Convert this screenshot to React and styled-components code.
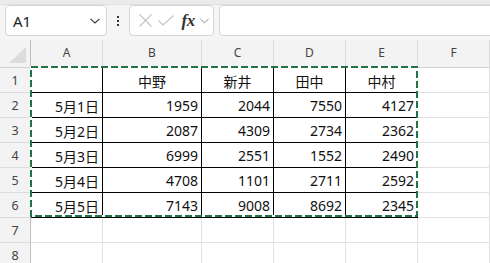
import React from 'react';
import styled, { createGlobalStyle } from 'styled-components';

const GlobalStyle = createGlobalStyle`
  html, body { margin: 0; padding: 0; background: #fff; overflow: hidden; }
  * { box-sizing: border-box; }
`;

const UI_FONT = `"Noto Sans", "Open Sans", "Noto Sans CJK JP", sans-serif`;
const CELL_FONT = `"Noto Sans", "Noto Sans CJK JP", sans-serif`;

const Window = styled.div`
  width: 490px;
  height: 263px;
  display: flex;
  flex-direction: column;
  overflow: hidden;
  background: #fff;
  & > * { flex-shrink: 0; }
`;

const TopStrip = styled.div`
  height: 5px;
  background: #ebebeb;
  border-bottom: 1px solid #e0e0e0;
`;

const Toolbar = styled.div`
  height: 35px;
  display: flex;
  align-items: flex-start;
  padding: 0 0 0 5px;
  background: #f5f5f5;
`;

const Box = styled.div`
  height: 31px;
  background: #fff;
  border: 1px solid #d6d6d6;
  border-radius: 4px;
  display: flex;
  align-items: center;
`;

const NameBox = styled(Box)`
  width: 102px;
  padding: 0 6px 0 7px;
  justify-content: space-between;
  font-family: ${UI_FONT};
  font-size: 15px;
  color: #222;
`;

const MoreDots = styled.div`
  width: 22px;
  height: 31px;
  display: flex;
  flex-direction: column;
  align-items: center;
  justify-content: center;
  gap: 2px;
  span {
    width: 2px;
    height: 2px;
    background: #333;
  }
`;

const FormulaButtons = styled(Box)`
  width: 85px;
  padding: 0 4px 0 5px;
`;

const IconSlot = styled.div`
  width: ${(p) => p.$w}px;
  display: flex;
  align-items: center;
  justify-content: center;
`;

const Fx = styled.span`
  font-family: "Liberation Serif", "DejaVu Serif", serif;
  font-style: italic;
  font-weight: bold;
  font-size: 17px;
  color: #333;
  letter-spacing: -0.5px;
`;

const FormulaInput = styled(Box)`
  flex: 1;
  margin-left: 5px;
  margin-right: -10px;
`;

const Sheet = styled.div`
  position: relative;
  display: grid;
  grid-template-columns: 31px 72px 99px 72px 72px 72px 72px;
  grid-template-rows: 28px repeat(8, 25px);
  background: #fff;
`;

const Corner = styled.div`
  background: #f3f3f3;
  border-right: 1px solid #bfbfbf;
  border-bottom: 1px solid #d0d0d0;
  display: flex;
  align-items: flex-end;
  justify-content: flex-end;
  padding: 0 4px 4px 0;
`;

const ColHead = styled.div`
  background: #f3f3f3;
  border-right: 1px solid #dadada;
  border-bottom: 1px solid #d0d0d0;
  display: flex;
  align-items: center;
  justify-content: center;
  padding-bottom: 2px;
  font-family: ${UI_FONT};
  font-size: 12px;
  color: #444;
`;

const RowHead = styled.div`
  background: #f3f3f3;
  border-right: 1px solid #bfbfbf;
  border-bottom: 1px solid #dcdcdc;
  display: flex;
  align-items: center;
  justify-content: center;
  font-family: ${UI_FONT};
  font-size: 12.5px;
  color: #444;
`;

const Cell = styled.div`
  border-right: 1px solid ${(p) => (p.$ruled ? '#000' : '#e1e1e1')};
  border-bottom: 1px solid ${(p) => (p.$ruled ? '#000' : '#e1e1e1')};
  display: flex;
  align-items: center;
  justify-content: ${(p) => (p.$align === 'center' ? 'center' : 'flex-end')};
  padding: 1px 3px 0 3px;
  font-family: ${CELL_FONT};
  font-size: 14px;
  color: #111;
  white-space: nowrap;
`;

const Marquee = styled.svg`
  position: absolute;
  left: 0;
  top: 0;
  pointer-events: none;
`;

const columns = ['A', 'B', 'C', 'D', 'E', 'F'];
const names = ['中野', '新井', '田中', '中村'];
const data = [
  ['5月1日', 1959, 2044, 7550, 4127],
  ['5月2日', 2087, 4309, 2734, 2362],
  ['5月3日', 6999, 2551, 1552, 2490],
  ['5月4日', 4708, 1101, 2711, 2592],
  ['5月5日', 7143, 9008, 8692, 2345],
];

const Chevron = ({ color = '#333', w = 10 }) => (
  <svg width={w} height={6} viewBox="0 0 10 6">
    <path d="M0.5 0.8 L5 5 L9.5 0.8" fill="none" stroke={color} strokeWidth="1.1" />
  </svg>
);

const App = () => {
  const rows = [];

  rows.push(
    <React.Fragment key="r1">
      <RowHead>1</RowHead>
      <Cell $ruled />
      {names.map((n) => (
        <Cell key={n} $ruled $align="center">{n}</Cell>
      ))}
      <Cell />
    </React.Fragment>
  );

  data.forEach((row, i) => {
    rows.push(
      <React.Fragment key={`r${i + 2}`}>
        <RowHead>{i + 2}</RowHead>
        {row.map((v, j) => (
          <Cell key={j} $ruled>{v}</Cell>
        ))}
        <Cell />
      </React.Fragment>
    );
  });

  [7, 8].forEach((n) => {
    rows.push(
      <React.Fragment key={`r${n}`}>
        <RowHead>{n}</RowHead>
        {columns.map((c) => (
          <Cell key={c} />
        ))}
      </React.Fragment>
    );
  });

  return (
    <>
      <GlobalStyle />
      <Window>
        <TopStrip />
        <Toolbar>
          <NameBox>
            <span>A1</span>
            <Chevron />
          </NameBox>
          <MoreDots>
            <span />
            <span />
            <span />
          </MoreDots>
          <FormulaButtons>
            <IconSlot $w={22}>
              <svg width="13" height="13" viewBox="0 0 13 13">
                <path d="M0.5 0.5 L12.5 12.5 M12.5 0.5 L0.5 12.5" stroke="#c4c4c4" strokeWidth="1.1" />
              </svg>
            </IconSlot>
            <IconSlot $w={22}>
              <svg width="16" height="11" viewBox="0 0 16 11">
                <path d="M0.5 5.5 L5 10 L15.5 0.5" fill="none" stroke="#c4c4c4" strokeWidth="1.1" />
              </svg>
            </IconSlot>
            <IconSlot $w={24}>
              <Fx>fx</Fx>
            </IconSlot>
            <IconSlot $w={10}>
              <Chevron color="#888" w={9} />
            </IconSlot>
          </FormulaButtons>
          <FormulaInput />
        </Toolbar>
        <Sheet>
          <Corner>
            <svg width="17" height="16" viewBox="0 0 17 16">
              <path d="M17 0 L17 16 L0 16 Z" fill="#dcdcdc" />
            </svg>
          </Corner>
          {columns.map((c) => (
            <ColHead key={c}>{c}</ColHead>
          ))}
          {rows}
          <Marquee width="490" height="230">
            <rect x="31" y="27" width="386" height="149" fill="none" stroke="#fff" strokeWidth="2" />
            <rect x="31" y="27" width="386" height="149" fill="none" stroke="#217346" strokeWidth="2" strokeDasharray="7 3" />
          </Marquee>
        </Sheet>
      </Window>
    </>
  );
};

export default App;
